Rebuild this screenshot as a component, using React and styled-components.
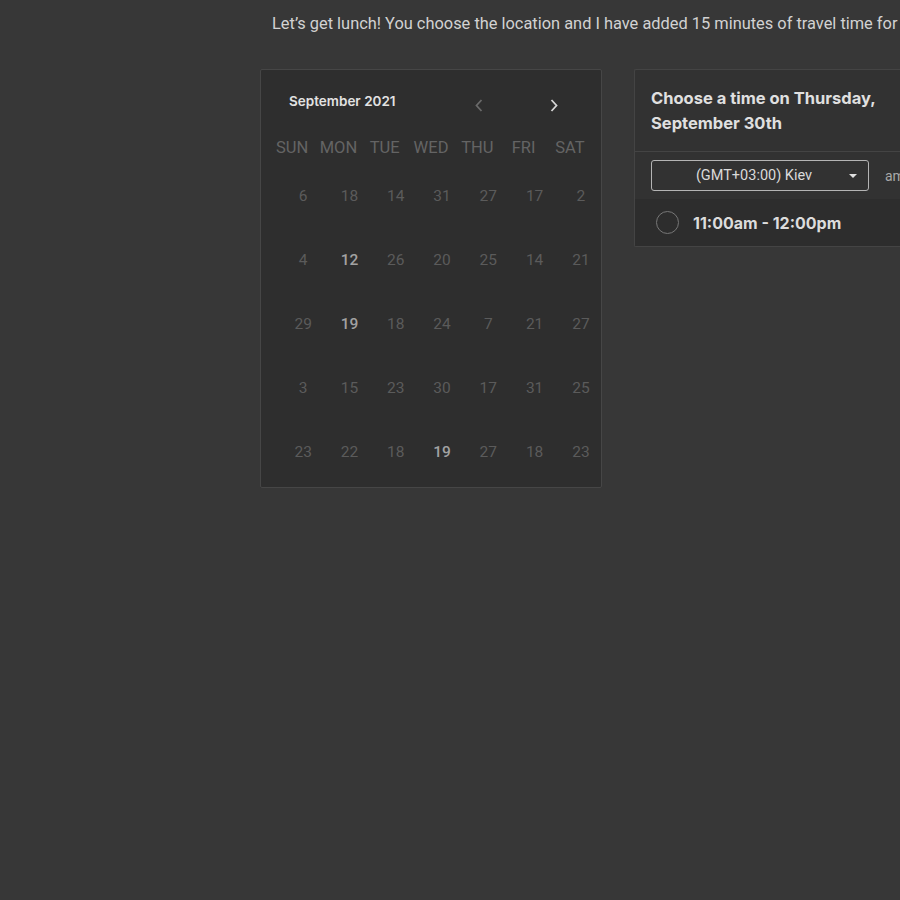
import React from "react";
import styled, { createGlobalStyle } from "styled-components";

const Global = createGlobalStyle`
  html, body { margin: 0; padding: 0; background: #373737; overflow: hidden; }
  body { font-family: Roboto, "Liberation Sans", sans-serif; }
`;

const Page = styled.div`
  width: 900px;
  height: 900px;
  overflow: hidden;
  padding: 14px 0 0 260px;
  box-sizing: border-box;
`;

const Intro = styled.p`
  margin: 0 0 0 12px;
  font-family: Roboto, sans-serif;
  font-size: 16.4px;
  line-height: 19px;
  color: #d2d2d2;
  white-space: nowrap;
`;

const Row = styled.div`
  display: flex;
  align-items: flex-start;
  gap: 32px;
  margin-top: 36px;
`;

const Calendar = styled.div`
  flex: 0 0 auto;
  width: 342px;
  height: 419px;
  box-sizing: border-box;
  background: #2e2e2e;
  border: 1px solid #464646;
  border-radius: 2px;
  padding: 21px 0 0 8px;
`;

const CalHeader = styled.div`
  display: flex;
  align-items: center;
  height: 20px;
  padding-left: 20px;
`;

const Month = styled.div`
  font-family: Inter, sans-serif;
  font-weight: 600;
  font-size: 13.5px;
  color: #e2e2e2;
  width: 180px;
`;

const NavBtn = styled.button`
  all: unset;
  display: flex;
  width: 20px;
  height: 20px;
  align-items: center;
  justify-content: center;
  margin-top: 8px;
  margin-right: ${(p) => p.$gap || 0}px;
  color: ${(p) => (p.$active ? "#d6d6d6" : "#6a6a6a")};
`;

const Grid = styled.div`
  display: grid;
  grid-template-columns: repeat(7, 46.3px);
  justify-items: center;
  padding-left: ${(p) => p.$offset}px;
`;

const WeekDays = styled(Grid)`
  margin-top: 26px;
  height: 20px;
  align-items: center;
`;

const WeekDay = styled.div`
  font-family: Roboto, sans-serif;
  font-size: 16.5px;
  color: #646464;
`;

const Days = styled(Grid)`
  margin-top: 29px;
  grid-auto-rows: 64px;
  align-items: start;
`;

const Day = styled.div`
  font-family: Roboto, sans-serif;
  font-size: 15.5px;
  line-height: 20px;
  color: ${(p) => (p.$on ? "#a2a2a2" : "#5b5b5b")};
  font-weight: ${(p) => (p.$on ? 500 : 400)};
`;

const Panel = styled.div`
  flex: 0 0 auto;
  width: 300px;
  box-sizing: border-box;
  border: 1px solid #444;
  border-right: none;
  border-radius: 2px 0 0 2px;
  background: #323232;
`;

const PanelHead = styled.div`
  height: 82px;
  box-sizing: border-box;
  padding: 16px 16px 0 16px;
  border-bottom: 1px solid #444;
  font-family: Inter, sans-serif;
  font-weight: 700;
  font-size: 16.5px;
  line-height: 25px;
  color: #e0e0e0;
  white-space: nowrap;
`;

const TzRow = styled.div`
  display: flex;
  align-items: center;
  height: 47px;
  padding-left: 16px;
  gap: 16px;
`;

const Select = styled.div`
  position: relative;
  width: 218px;
  height: 31px;
  box-sizing: border-box;
  border: 1px solid #b4b4b4;
  border-radius: 3px;
  display: flex;
  align-items: center;
  justify-content: center;
  font-family: Roboto, sans-serif;
  font-size: 14.5px;
  color: #dadada;
  padding-right: 12px;
`;

const Caret = styled.span`
  position: absolute;
  right: 11px;
  top: 13px;
  width: 0;
  height: 0;
  border-left: 4px solid transparent;
  border-right: 4px solid transparent;
  border-top: 4px solid #e0e0e0;
`;

const AmLabel = styled.span`
  font-family: Roboto, sans-serif;
  font-size: 14px;
  color: #a8a8a8;
`;

const Slot = styled.div`
  display: flex;
  align-items: center;
  gap: 14px;
  height: 47px;
  padding-left: 22px;
  background: #2d2d2d;
`;

const Radio = styled.span`
  width: 21px;
  height: 21px;
  border: 1.5px solid #777;
  border-radius: 50%;
  box-sizing: content-box;
  margin-left: -1px;
`;

const SlotText = styled.span`
  font-family: Inter, sans-serif;
  font-weight: 700;
  font-size: 16px;
  color: #dcdcdc;
`;

const Chevron = ({ dir }) => (
  <svg width="8" height="13" viewBox="0 0 8 13">
    <polyline
      points={dir === "left" ? "6.5,1 1.5,6.5 6.5,12" : "1.5,1 6.5,6.5 1.5,12"}
      fill="none"
      stroke="currentColor"
      strokeWidth="1.8"
    />
  </svg>
);

const weekdays = ["SUN", "MON", "TUE", "WED", "THU", "FRI", "SAT"];
const rows = [
  [6, 18, 14, 31, 27, 17, 2],
  [4, 12, 26, 20, 25, 14, 21],
  [29, 19, 18, 24, 7, 21, 27],
  [3, 15, 23, 30, 17, 31, 25],
  [23, 22, 18, 19, 27, 18, 23],
];
const active = { "1-1": true, "2-1": true, "4-3": true };

export default function App() {
  return (
    <>
      <Global />
      <Page>
        <Intro>
          Let’s get lunch! You choose the location and I have added 15 minutes of travel time for you.
        </Intro>
        <Row>
          <Calendar>
            <CalHeader>
              <Month>September 2021</Month>
              <NavBtn $gap={55}>
                <Chevron dir="left" />
              </NavBtn>
              <NavBtn $active>
                <Chevron dir="right" />
              </NavBtn>
            </CalHeader>
            <WeekDays $offset={0}>
              {weekdays.map((w) => (
                <WeekDay key={w}>{w}</WeekDay>
              ))}
            </WeekDays>
            <Days $offset={11}>
              {rows.map((r, i) =>
                r.map((d, j) => (
                  <Day key={`${i}-${j}`} $on={active[`${i}-${j}`]}>
                    {d}
                  </Day>
                ))
              )}
            </Days>
          </Calendar>
          <Panel>
            <PanelHead>
              Choose a time on Thursday,
              <br />
              September 30th
            </PanelHead>
            <TzRow>
              <Select>
                (GMT+03:00) Kiev
                <Caret />
              </Select>
              <AmLabel>am/pm</AmLabel>
            </TzRow>
            <Slot>
              <Radio />
              <SlotText>11:00am - 12:00pm</SlotText>
            </Slot>
          </Panel>
        </Row>
      </Page>
    </>
  );
}
